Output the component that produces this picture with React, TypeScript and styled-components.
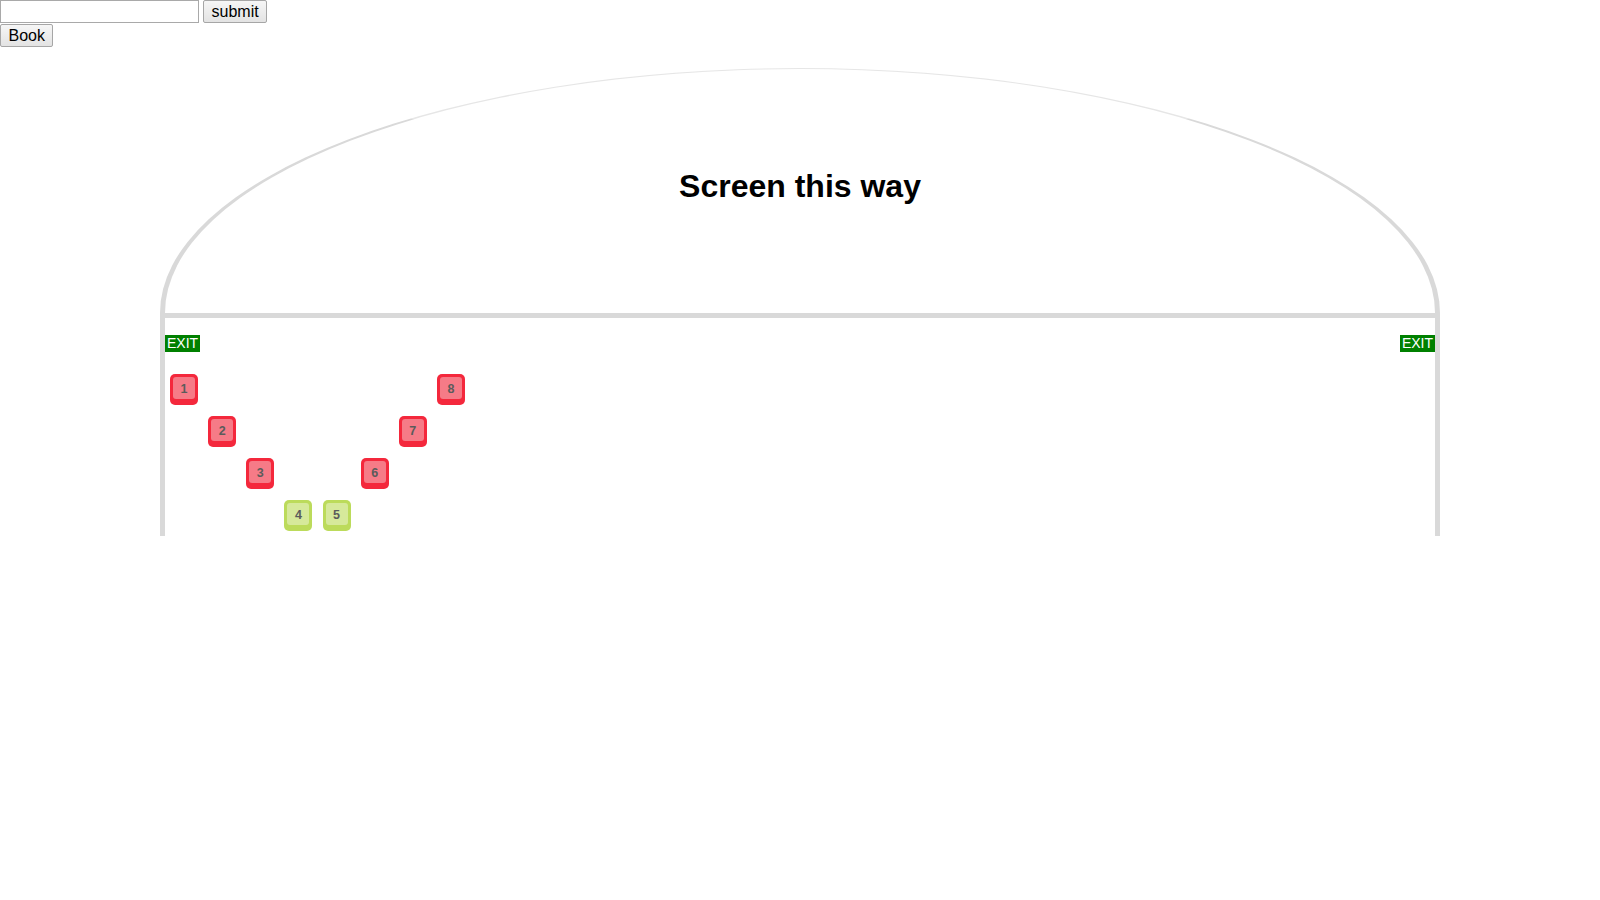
import React from "react";
import styled, { createGlobalStyle } from "styled-components";

const GlobalStyle = createGlobalStyle`
  html, body {
    margin: 0;
    padding: 0;
    background: #ffffff;
    font-family: "Liberation Sans", Arial, sans-serif;
  }
`;

const TopForm = styled.form`
  display: flex;
  align-items: flex-start;
  gap: 4px;
  height: 23px;
`;

const TextInput = styled.input`
  box-sizing: border-box;
  width: 199px;
  height: 23px;
  margin: 0;
  padding: 1px 2px;
  border: 1px solid #a9a9a9;
  font-family: "Liberation Sans", Arial, sans-serif;
  font-size: 16px;
  background: #fff;
  outline: none;
`;

const Button = styled.button`
  box-sizing: border-box;
  height: 23px;
  margin: 0;
  padding: 0 7.5px;
  border: 1px solid #a6a6a6;
  border-radius: 2px;
  background: linear-gradient(#f6f6f6, #e3e3e3);
  color: #000;
  font-family: "Liberation Sans", Arial, sans-serif;
  font-size: 16px;
  line-height: 20px;
  cursor: pointer;
`;

const BookRow = styled.div`
  margin-top: 1px;
  height: 23px;
`;

const Theatre = styled.div`
  width: 80%;
  margin: 21px auto 0;
`;

const Screen = styled.div`
  box-sizing: border-box;
  height: 245px;
  padding-top: 99px;
  border: 5px solid #d9d9d9;
  border-top-width: 1px;
  border-top-color: #e6e6e6;
  border-bottom: none;
  border-radius: 50% 50% 0 0 / 100% 100% 0 0;
  text-align: center;
`;

const ScreenTitle = styled.h1`
  margin: 0;
  font-size: 32px;
  font-weight: bold;
  color: #000;
`;

const Seating = styled.div`
  box-sizing: border-box;
  height: 223px;
  padding: 17px 0 5px;
  border: 5px solid #d9d9d9;
  border-bottom: none;
`;

const ExitRow = styled.div`
  display: flex;
  justify-content: space-between;
`;

const Exit = styled.span`
  display: inline-block;
  padding: 0 2px;
  background: #008000;
  color: #ffffff;
  font-size: 14px;
  line-height: 17px;
`;

const SeatGrid = styled.div`
  display: grid;
  grid-template-columns: repeat(8, 28px);
  grid-template-rows: repeat(4, 31px);
  column-gap: 10.15px;
  row-gap: 11px;
  margin: 22px 0 0 5px;
`;

type SeatStatus = "booked" | "free";

const outerColors: Record<SeatStatus, string> = {
  booked: "#f4283c",
  free: "#bcdb5b",
};

const faceColors: Record<SeatStatus, string> = {
  booked: "#f67b87",
  free: "#d6e99b",
};

const SeatBox = styled.div<{ $col: number; $row: number; $status: SeatStatus }>`
  grid-column: ${(p) => p.$col};
  grid-row: ${(p) => p.$row};
  box-sizing: border-box;
  width: 28px;
  height: 31px;
  padding: 3px 3px 6px;
  border-radius: 5px;
  background: ${(p) => outerColors[p.$status]};
  cursor: pointer;
`;

const SeatFace = styled.div<{ $status: SeatStatus }>`
  display: flex;
  align-items: center;
  justify-content: center;
  height: 100%;
  border-radius: 3px;
  background: ${(p) => faceColors[p.$status]};
  color: #5b5b5b;
  font-size: 12.5px;
  font-weight: bold;
  padding-top: 1px;
  box-sizing: border-box;
`;

const seats: { n: number; col: number; row: number; status: SeatStatus }[] = [
  { n: 1, col: 1, row: 1, status: "booked" },
  { n: 2, col: 2, row: 2, status: "booked" },
  { n: 3, col: 3, row: 3, status: "booked" },
  { n: 4, col: 4, row: 4, status: "free" },
  { n: 5, col: 5, row: 4, status: "free" },
  { n: 6, col: 6, row: 3, status: "booked" },
  { n: 7, col: 7, row: 2, status: "booked" },
  { n: 8, col: 8, row: 1, status: "booked" },
];

export default function App() {
  return (
    <>
      <GlobalStyle />
      <TopForm onSubmit={(e) => e.preventDefault()}>
        <TextInput type="text" />
        <Button type="submit">submit</Button>
      </TopForm>
      <BookRow>
        <Button type="button">Book</Button>
      </BookRow>
      <Theatre>
        <Screen>
          <ScreenTitle>Screen this way</ScreenTitle>
        </Screen>
        <Seating>
          <ExitRow>
            <Exit>EXIT</Exit>
            <Exit>EXIT</Exit>
          </ExitRow>
          <SeatGrid>
            {seats.map((s) => (
              <SeatBox key={s.n} $col={s.col} $row={s.row} $status={s.status}>
                <SeatFace $status={s.status}>{s.n}</SeatFace>
              </SeatBox>
            ))}
          </SeatGrid>
        </Seating>
      </Theatre>
    </>
  );
}
